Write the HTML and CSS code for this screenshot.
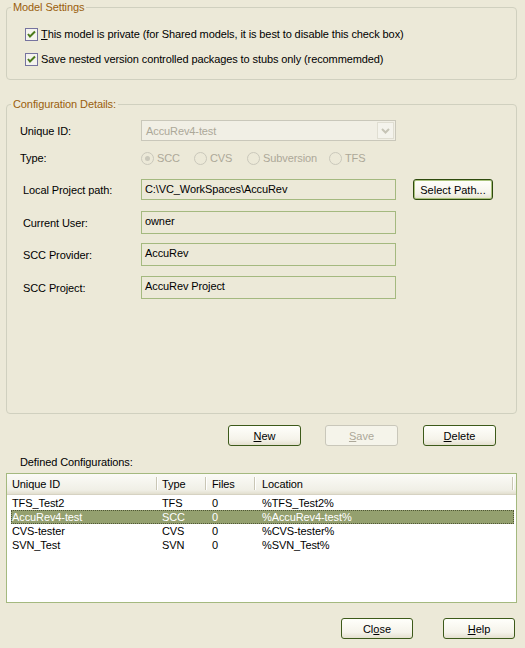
FILE: index.html
```html
<!DOCTYPE html>
<html lang="en">
<head>
  <meta charset="UTF-8" />
  <title>Version Control Settings</title>
  <link rel="stylesheet" href="styles.css">
</head>
<body>
  <div class="dialog">
    <fieldset class="group model">
      <legend>Model Settings</legend>
      <label class="check">
        <svg class="box" width="13" height="13" viewBox="0 0 13 13"><rect x="0.5" y="0.5" width="12" height="12" fill="#f4f3ee" stroke="#76739f"/><path d="M3 6 L5 8.5 L10 3.5" fill="none" stroke="#4b7a1a" stroke-width="2"/></svg>
        <span><u>T</u>his model is private (for Shared models, it is best to disable this check box)</span>
      </label>
      <label class="check second">
        <svg class="box" width="13" height="13" viewBox="0 0 13 13"><rect x="0.5" y="0.5" width="12" height="12" fill="#f4f3ee" stroke="#76739f"/><path d="M3 6 L5 8.5 L10 3.5" fill="none" stroke="#4b7a1a" stroke-width="2"/></svg>
        <span>Save nested version controlled packages to stubs only (recommemded)</span>
      </label>
    </fieldset>

    <fieldset class="group config">
      <legend>Configuration Details:</legend>
      <div class="row r-id">
        <span class="lbl">Unique ID:</span>
        <div class="combo">
          <span class="combo-text">AccuRev4-test</span>
          <span class="drop"><svg width="9" height="6" viewBox="0 0 9 6"><path d="M1 1 L4.5 4.5 L8 1" fill="none" stroke="#c6c4b6" stroke-width="2"/></svg></span>
        </div>
      </div>
      <div class="row r-type">
        <span class="lbl">Type:</span>
        <div class="radios">
          <span class="radio w53"><span class="dot on"></span>SCC</span>
          <span class="radio w53"><span class="dot"></span>CVS</span>
          <span class="radio w82"><span class="dot"></span>Subversion</span>
          <span class="radio"><span class="dot"></span>TFS</span>
        </div>
      </div>
      <div class="row r-path">
        <span class="lbl in">Local Project path:</span>
        <div class="field">C:\VC_WorkSpaces\AccuRev</div>
        <button class="btn default">Select Path...</button>
      </div>
      <div class="row r-user">
        <span class="lbl in">Current User:</span>
        <div class="field tall">owner</div>
      </div>
      <div class="row r-prov">
        <span class="lbl in">SCC Provider:</span>
        <div class="field tall">AccuRev</div>
      </div>
      <div class="row r-proj">
        <span class="lbl in">SCC Project:</span>
        <div class="field tall">AccuRev Project</div>
      </div>
    </fieldset>

    <div class="actions">
      <button class="btn"><u>N</u>ew</button>
      <button class="btn save" disabled><u>S</u>ave</button>
      <button class="btn del"><u>D</u>elete</button>
    </div>

    <div class="list-label">Defined Configurations:</div>
    <div class="listview">
      <div class="lv-head">
        <span class="hcell c1">Unique ID</span>
        <span class="hcell c2">Type</span>
        <span class="hcell c3">Files</span>
        <span class="hcell c4">Location</span>
      </div>
      <div class="lv-row first"><span>TFS_Test2</span><span>TFS</span><span>0</span><span>%TFS_Test2%</span></div>
      <div class="lv-row selected"><span>AccuRev4-test</span><span>SCC</span><span>0</span><span>%AccuRev4-test%</span></div>
      <div class="lv-row"><span>CVS-tester</span><span>CVS</span><span>0</span><span>%CVS-tester%</span></div>
      <div class="lv-row"><span>SVN_Test</span><span>SVN</span><span>0</span><span>%SVN_Test%</span></div>
    </div>

    <div class="footer">
      <button class="btn">Cl<u>o</u>se</button>
      <button class="btn"><u>H</u>elp</button>
    </div>
  </div>
</body>
</html>
```

FILE: styles.css
```css
* { box-sizing: border-box; }
body {
  margin: 0;
  background: #ece9d8;
  font-family: 'Liberation Sans', Arial, sans-serif;
  font-size: 11px;
  letter-spacing: -0.1px;
  color: #000;
}

.dialog {
  width: 525px;
  height: 648px;
  padding: 0 8px 0 6px;
}

.group {
  margin: 0;
  padding: 0;
  min-width: 0;
  border: 1px solid #d0d0bf;
  border-radius: 4px;
}

.group legend {
  color: #9a5e0c;
  line-height: 14px;
  padding: 0 2px;
  margin-left: 4px;
}

/* model settings */
.model {
  padding: 12px 0 12px;
}

.check {
  display: flex;
  align-items: center;
  gap: 3px;
  height: 16px;
  margin-left: 18px;
}

.check.second { margin-top: 9px; }
.check .box { flex: none; }

/* configuration details */
.config {
  margin-top: 17px;
  height: 317px;
  padding-top: 9px;
}

.row {
  display: flex;
  align-items: center;
  padding-left: 13px;
}

.lbl {
  width: 121px;
  flex: none;
}

.lbl.in { padding-left: 3px; }

.r-id { height: 21px; }
.r-type { height: 14px; margin-top: 10px; }
.r-path { height: 21px; margin-top: 14px; }
.r-user { height: 23px; margin-top: 11px; }
.r-prov { height: 23px; margin-top: 9px; }
.r-proj { height: 23px; margin-top: 10px; }

.combo {
  width: 255px;
  height: 21px;
  border: 1px solid #c9c7ba;
  background: #f1efe5;
  display: flex;
  align-items: center;
  justify-content: space-between;
  padding: 1px;
  color: #aca899;
}

.combo-text { padding-left: 3px; }

.drop {
  width: 17px;
  height: 17px;
  background: #f4f3ec;
  border: 1px solid #e0ded2;
  display: flex;
  align-items: center;
  justify-content: center;
}

.radios {
  display: flex;
  align-items: center;
  color: #aca899;
}

.radio {
  display: flex;
  align-items: center;
  gap: 2px;
}

.radio.w53 { width: 53px; }
.radio.w82 { width: 82px; }

.dot {
  width: 13px;
  height: 13px;
  border: 1px solid #cac8bb;
  border-radius: 50%;
  display: flex;
  align-items: center;
  justify-content: center;
  margin-right: 1px;
}

.dot.on::after {
  content: "";
  width: 5px;
  height: 5px;
  border-radius: 50%;
  background: #cac8bb;
}

.field {
  width: 255px;
  height: 21px;
  border: 1px solid #a4b97f;
  padding: 0 3px 1px;
  display: flex;
  align-items: center;
}

.field.tall {
  height: 23px;
  padding-bottom: 3px;
}

/* buttons */
.btn {
  font: inherit;
  color: #000;
  width: 73px;
  height: 21px;
  padding: 0;
  border: 1px solid #3d5a1a;
  border-radius: 3px;
  background: linear-gradient(#fffffb, #f5f3ea 70%, #e4e0cf);
  cursor: pointer;
}

.btn.default {
  width: 80px;
  margin-left: 17px;
  border-color: #2e4a0e;
  box-shadow: inset 0 0 0 1px #a9c27c;
}

.btn:disabled {
  color: #aca899;
  border-color: #c9c7ba;
  background: #f5f4ea;
  cursor: default;
}

.actions {
  display: flex;
  margin-top: 11px;
  padding-left: 222px;
}

.actions .save { margin-left: 24px; }
.actions .del { margin-left: 25px; }

.list-label {
  margin-top: 9px;
  padding-left: 14px;
  line-height: 14px;
}

/* list view */
.listview {
  margin-top: 4px;
  height: 130px;
  border: 1px solid #a4b97f;
  background: #fff;
}

.lv-head {
  display: grid;
  grid-template-columns: 150px 49px 49px 1fr;
  height: 21px;
  background: linear-gradient(#fbfbf7, #f0efe6 80%, #e2dfcf);
  border-bottom: 1px solid #d6d2c2;
}

.hcell {
  position: relative;
  display: flex;
  align-items: center;
  padding-left: 5px;
}

.hcell::after {
  content: "";
  position: absolute;
  right: 0;
  top: 3px;
  bottom: 4px;
  width: 1px;
  background: #c9c6b5;
  box-shadow: 1px 0 0 #fff;
}

.hcell.c2 { padding-left: 5px; }
.hcell.c3 { padding-left: 6px; }
.hcell.c4 { padding-left: 7px; margin-right: 3px; }

.lv-row {
  display: grid;
  grid-template-columns: 146px 49px 49px 1fr;
  height: 14px;
  line-height: 14px;
  margin: 0 2px 0 4px;
}

.lv-row.first { margin-top: 1px; }

.lv-row span:nth-child(1) { padding-left: 1px; }
.lv-row span:nth-child(2) { padding-left: 5px; }
.lv-row span:nth-child(3) { padding-left: 6px; }
.lv-row span:nth-child(4) { padding-left: 7px; }

.lv-row.selected {
  background: #94a06f;
  color: #fff;
  outline: 1px dotted #4f5634;
  outline-offset: -1px;
}

.footer {
  display: flex;
  justify-content: flex-end;
  gap: 30px;
  margin-top: 15px;
  padding-right: 2px;
}

.footer .btn { width: 72px; }
```
